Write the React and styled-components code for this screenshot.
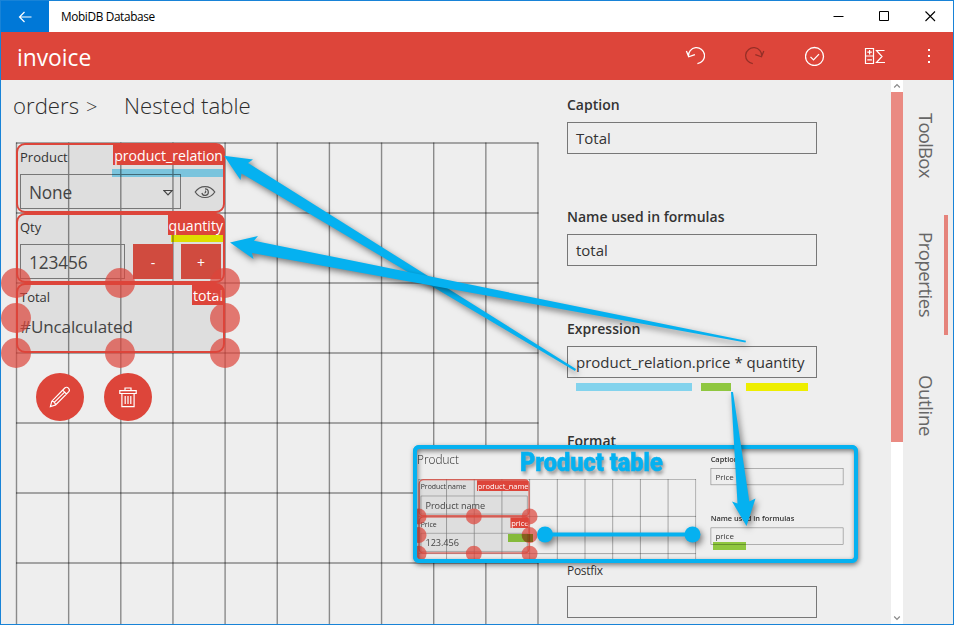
import React from 'react';
import styled, { createGlobalStyle, css } from 'styled-components';

const RED = '#dd453a';
const CYAN = '#05b1f0';
const SURFACE = '#eeeeee';

const GlobalStyle = createGlobalStyle`
  *, *::before, *::after { box-sizing: border-box; }
  body { margin: 0; overflow: hidden; }
  button { font: inherit; border: 0; padding: 0; margin: 0; }
`;

/* ---------- window chrome ---------- */

const Window = styled.div`
  position: relative;
  display: flex;
  flex-direction: column;
  width: 954px;
  height: 625px;
  overflow: hidden;
  border: 1px solid #1883d7;
  background: ${SURFACE};
  color: #333;
  font-family: 'Open Sans', 'Noto Sans', sans-serif;
`;

const TitleBar = styled.header`
  display: flex;
  flex: 0 0 31px;
  background: #fff;
`;

const BackButton = styled.button`
  display: grid;
  place-items: center;
  width: 48px;
  background: #0078d7;
  color: #fff;
`;

const WindowTitle = styled.div`
  flex: 1;
  padding-left: 12px;
  color: #000;
  font-size: 11.8px;
  line-height: 30px;
  letter-spacing: -0.35px;
`;

const CaptionButton = styled.button`
  display: grid;
  place-items: center;
  width: 46px;
  background: transparent;
  color: #000;
`;

const AppBar = styled.div`
  display: flex;
  flex: 0 0 48px;
  background: ${RED};
  color: #fff;
`;

const AppTitle = styled.h1`
  flex: 1;
  margin: 0;
  padding: 3px 0 0 16px;
  font-size: 22.8px;
  font-weight: 400;
  line-height: 45px;
`;

const BarButton = styled.button`
  display: grid;
  place-items: center;
  width: ${(p) => p.$width || 60}px;
  background: transparent;
  color: ${(p) => (p.$muted ? '#962f27' : '#fff')};
`;

const Body = styled.main`
  display: flex;
  flex: 1;
  min-height: 0;
`;

/* ---------- design surface ---------- */

const Designer = styled.section`
  flex: 0 0 ${(p) => p.$width}px;
  padding-left: ${(p) => p.$inset}px;
`;

const Crumbs = styled.nav`
  display: flex;
  align-items: flex-end;
  height: ${(p) => p.$height}px;
  padding-bottom: 21px;
  margin-left: -2px;
  font-size: 22.2px;
  font-weight: 300;
  line-height: 30px;
  color: #2c2c2c;
`;

const CrumbSeparator = styled.span`
  width: 38px;
  margin-left: 7px;
  font-size: 20px;
  transform: translateY(1px);
`;

const Canvas = styled.div`
  position: relative;
  width: 524px;
  height: 490px;
`;

const GridLines = styled.svg`
  display: block;
  stroke: #000;
  stroke-opacity: 0.42;
  stroke-width: 1.4;
`;

const Widget = styled.div`
  position: absolute;
  left: 1px;
  top: ${(p) => p.$row * 70 + 1}px;
  display: flex;
  flex-direction: column;
  width: 209px;
  height: 70px;
  padding: 2px;
  border: 2px solid ${RED};
  border-radius: 9px;
  background: rgba(0, 0, 0, 0.065);
`;

const WidgetHead = styled.div`
  display: flex;
  justify-content: space-between;
  height: 29px;
  margin: -2px -2px 0 0;
  font-size: 13px;
  line-height: 24px;
`;

const NameTag = styled.span`
  height: 20px;
  padding: 0 0 0 1px;
  border-top-right-radius: 5px;
  background: ${RED};
  color: #fff;
  font-size: 14.1px;
  line-height: 21px;
`;

const WidgetRow = styled.div`
  display: flex;
  gap: 8px;
  height: 35px;
`;

const ValueBox = styled.div`
  display: flex;
  align-items: center;
  justify-content: space-between;
  width: ${(p) => p.$width}px;
  padding: 2px 7px 0 8px;
  border: 1px solid #777;
  color: #444;
  font-size: 17.3px;
  letter-spacing: -0.15px;
`;

const PlainValue = styled.div`
  font-size: 17px;
  line-height: 25px;
  letter-spacing: -0.1px;
  color: #444;
`;

const StepButton = styled.button`
  width: 40px;
  background: #d04b3f;
  color: #fff;
  font-size: 14px;
  line-height: 38px;
`;

const EyeSlot = styled.div`
  display: grid;
  place-items: center;
  width: 32px;
  color: #555;
`;

const Handle = styled.i`
  position: absolute;
  left: ${(p) => p.$x - 15}px;
  top: ${(p) => p.$y - 14}px;
  width: 30px;
  height: 30px;
  border-radius: 50%;
  background: rgba(221, 69, 58, 0.7);
`;

const WidgetActions = styled.div`
  position: absolute;
  left: 21px;
  top: 231px;
  display: flex;
  gap: 20px;
`;

const RoundButton = styled.button`
  display: grid;
  place-items: center;
  width: 48px;
  height: 48px;
  border-radius: 50%;
  background: ${RED};
  color: #fff;
`;

/* ---------- properties ---------- */

const PropertyPane = styled.section`
  flex: 0 0 324px;
  padding-top: ${(p) => p.$top}px;
`;

const Field = styled.label`
  display: block;
  width: 250px;
  height: 112px;
`;

const FieldLabel = styled.span`
  display: block;
  height: 28px;
  font-size: 14px;
  font-weight: 600;
  line-height: 22px;
  ${(p) =>
    p.$plain &&
    css`
      height: 44px;
      padding-top: 20px;
      font-size: 12px;
      font-weight: 400;
      line-height: 17px;
      letter-spacing: -0.3px;
    `}
`;

const FieldBox = styled.span`
  display: block;
  height: 32px;
  padding-left: 8px;
  border: 1px solid #777;
  font-size: 15px;
  line-height: 31px;
`;

/* ---------- scrollbar and side tabs ---------- */

const ScrollBar = styled.div`
  display: flex;
  flex: 0 0 12px;
  flex-direction: column;
  margin-left: auto;
  background: #fff;
  color: #888;
`;

const ScrollArrow = styled.span`
  display: grid;
  place-items: center;
  height: 12px;
`;

const ScrollThumb = styled.span`
  height: 350px;
  margin-bottom: auto;
  background: #ea8a82;
`;

const Tabs = styled.aside`
  display: flex;
  flex: 0 0 50px;
  flex-direction: column;
  gap: 10px;
  padding: 5px 5px 0 0;
`;

const Tab = styled.div`
  display: flex;
  align-items: center;
  justify-content: center;
  height: 120px;
  padding-left: 4px;
  border-right: 4px solid ${(p) => (p.$active ? '#e5837b' : 'transparent')};
`;

const TabText = styled.span`
  color: #666;
  font-size: 18.6px;
  line-height: 26px;
  letter-spacing: ${(p) => p.$tracking}px;
  writing-mode: vertical-rl;
`;

/* ---------- annotations ---------- */

const Inset = styled.div`
  position: absolute;
  left: 412px;
  top: 444px;
  width: 445px;
  height: 118px;
  overflow: hidden;
  border: 4px solid ${CYAN};
  border-radius: 6px;
  background: ${SURFACE};
`;

const InsetFrame = styled.div`
  position: absolute;
  left: 412px;
  top: 444px;
  width: 445px;
  height: 118px;
  border: 4px solid ${CYAN};
  border-radius: 6px;
  box-shadow: 1px 2px 5px rgba(0, 0, 0, 0.5), inset 1px 2px 5px rgba(0, 0, 0, 0.5);
`;

const InsetStage = styled.div`
  display: flex;
  width: 830px;
  height: 210px;
  transform: scale(0.531);
  transform-origin: 0 0;
`;

const InsetTitle = styled.div`
  position: absolute;
  left: 519px;
  top: 446px;
  color: ${CYAN};
  font-family: Roboto, sans-serif;
  font-size: 26px;
  font-weight: 900;
  line-height: 30px;
  white-space: nowrap;
  -webkit-text-stroke: 0.5px ${CYAN};
  text-shadow: 2px 3px 4px rgba(0, 0, 0, 0.4);
  transform: scaleX(0.905);
  transform-origin: 0 0;
`;

const markerColors = { blue: '#8ce2fe', green: '#99d644', yellow: '#ffff00' };

const Marker = styled.i`
  position: absolute;
  left: ${(p) => p.$x - 1}px;
  top: ${(p) => p.$y - 1}px;
  width: ${(p) => p.$w}px;
  height: ${(p) => p.$h || 8}px;
  background: ${(p) => markerColors[p.$color]};
  mix-blend-mode: multiply;
`;

const Arrows = styled.svg`
  position: absolute;
  left: -1px;
  top: -1px;
  fill: ${CYAN};
  pointer-events: none;

  g { filter: drop-shadow(2px 3px 3px rgba(0, 0, 0, 0.5)); }
`;

/* ---------- icons ---------- */

const Icon = ({ w, h = w, stroke = 1.3, children }) => (
  <svg width={w} height={h} viewBox={`0 0 ${w} ${h}`} fill="none" stroke="currentColor" strokeWidth={stroke}>
    {children}
  </svg>
);

const BackIcon = () => (
  <Icon w={14} h={12} stroke={1.2}><path d="M13.5 6H1.5M6.5 1 1.5 6l5 5" /></Icon>
);
const UndoIcon = () => (
  <Icon w={20}><path d="M3.6 10.6A8 8 0 1 1 12.4 17.6M1.4 5l2.3 5.8 6.2-2.2" /></Icon>
);
const RedoIcon = () => (
  <Icon w={20}><path d="M16.6 10.6A8 8 0 1 0 7.8 17.6M18.8 5l-2.3 5.8-6.2-2.2" /></Icon>
);
const CheckIcon = () => (
  <Icon w={20}><circle cx="9.5" cy="10.5" r="9" /><path d="m5.5 10.9 3 3 5.500-5.800" /></Icon>
);
const FormulaIcon = () => (
  <Icon w={22} h={18} stroke={1.2}>
    <path d="M1.5 1.5h8v15h-8zM1.5 9h8M3.3 5.2h4.6M5.6 3v4.5M3.3 12.8h4.6M20.5 3.5h-8l5.500 6-5.500 6h8.500" />
  </Icon>
);
const MoreIcon = () => (
  <Icon w={4} h={16} stroke={0}>
    <path fill="currentColor" d="M1 1h2v2H1zM1 7h2v2H1zM1 13h2v2H1z" />
  </Icon>
);
const EyeIcon = () => (
  <Icon w={22} h={14} stroke={1.2}>
    <path d="M1.2 7C6-.3 16-.3 20.8 7 16 14.3 6 14.3 1.2 7z" />
    <path d="M11 3.8A3.3 3.3 0 1 1 7.9 8M11 5.9c1.2.3 1 2-.5 1.9" />
  </Icon>
);
const DropIcon = () => (
  <Icon w={10} h={8} stroke={1.1}><path d="M.8 1.5h8.400L5 6z" /></Icon>
);
const PencilIcon = () => (
  <Icon w={22} stroke={1.2}>
    <path d="m1.4 20.6 1.4-5.4L15.8 2c1.3-1.3 2.7-.7 3.6.2s1.5 2.3.2 3.6L6.6 19zM2.8 15.2c1.8.2 3.4 1.8 3.8 3.8M13.7 4.2l3.8 3.8M15.6 6.1 5 16.7" />
  </Icon>
);
const TrashIcon = () => (
  <Icon w={18} h={22} stroke={1.2}>
    <path d="M.8 4.6h16.4v2.9H.8zM6 4.5V2h6v2.5M2.9 7.6v13h12.2v-13M6.2 10v8M9 10v8M11.8 10v8" />
  </Icon>
);

/* ---------- parts ---------- */

const DesignGrid = () => (
  <GridLines width="524" height="490" viewBox="0 0 524 490">
    {Array.from({ length: 11 }, (_, i) => (
      <line key={`v${i}`} x1={1.5 + i * 52.15} x2={1.5 + i * 52.15} y1="0.5" y2="490" />
    ))}
    {Array.from({ length: 7 }, (_, i) => (
      <line key={`h${i}`} x1="1" x2="523.5" y1={1 + i * 70} y2={1 + i * 70} />
    ))}
  </GridLines>
);

const HANDLES = [[1, 0], [105, 0], [210, 0], [1, 35], [210, 35], [1, 70], [105, 70], [210, 70]];

const SelectionHandles = ({ row }) =>
  HANDLES.map(([x, y]) => <Handle key={`${x}-${y}`} $x={x} $y={row * 70 + y} />);

const DesignWidget = ({ row, caption, name, children }) => (
  <Widget $row={row}>
    <WidgetHead>
      {caption}
      <NameTag>{name}</NameTag>
    </WidgetHead>
    {children}
  </Widget>
);

const Property = ({ label, value, plain }) => (
  <Field>
    <FieldLabel $plain={plain}>{label}</FieldLabel>
    <FieldBox>{value}</FieldBox>
  </Field>
);

const ProductTableInset = () => (
  <Inset>
    <InsetStage>
      <Designer $width={553} $inset={2}>
        <Crumbs $height={56}>Product</Crumbs>
        <Canvas>
          <DesignGrid />
          <DesignWidget row={0} caption="Product name" name="product_name">
            <WidgetRow><ValueBox $width={201}>Product name</ValueBox></WidgetRow>
          </DesignWidget>
          <DesignWidget row={1} caption="Price" name="price">
            <WidgetRow><ValueBox $width={201}>123.456</ValueBox></WidgetRow>
          </DesignWidget>
          <SelectionHandles row={1} />
        </Canvas>
      </Designer>
      <PropertyPane $top={8}>
        <Property label="Caption" value="Price" />
        <Property label="Name used in formulas" value="price" />
      </PropertyPane>
    </InsetStage>
  </Inset>
);

export default function App() {
  return (
    <Window>
      <GlobalStyle />
      <TitleBar>
        <BackButton><BackIcon /></BackButton>
        <WindowTitle>MobiDB Database</WindowTitle>
        <CaptionButton><Icon w={11} stroke={1}><path d="M.5 5.5h10" /></Icon></CaptionButton>
        <CaptionButton><Icon w={11} stroke={1}><path d="M.5.5h9v9h-9z" /></Icon></CaptionButton>
        <CaptionButton><Icon w={11} stroke={1.1}><path d="m.5.5 9.5 9.5M10 .5.5 10" /></Icon></CaptionButton>
      </TitleBar>

      <AppBar>
        <AppTitle>invoice</AppTitle>
        <BarButton><UndoIcon /></BarButton>
        <BarButton $muted><RedoIcon /></BarButton>
        <BarButton><CheckIcon /></BarButton>
        <BarButton><FormulaIcon /></BarButton>
        <BarButton $width={48}><MoreIcon /></BarButton>
      </AppBar>

      <Body>
        <Designer $width={566} $inset={14}>
          <Crumbs $height={62}>
            orders<CrumbSeparator>&gt;</CrumbSeparator>Nested table
          </Crumbs>
          <Canvas>
            <DesignGrid />
            <DesignWidget row={0} caption="Product" name="product_relation">
              <WidgetRow>
                <ValueBox $width={161}>None<DropIcon /></ValueBox>
                <EyeSlot><EyeIcon /></EyeSlot>
              </WidgetRow>
            </DesignWidget>
            <DesignWidget row={1} caption="Qty" name="quantity">
              <WidgetRow>
                <ValueBox $width={105}>123456</ValueBox>
                <StepButton>-</StepButton>
                <StepButton>+</StepButton>
              </WidgetRow>
            </DesignWidget>
            <DesignWidget row={2} caption="Total" name="total">
              <PlainValue>#Uncalculated</PlainValue>
            </DesignWidget>
            <SelectionHandles row={2} />
            <WidgetActions>
              <RoundButton><PencilIcon /></RoundButton>
              <RoundButton><TrashIcon /></RoundButton>
            </WidgetActions>
          </Canvas>
        </Designer>

        <PropertyPane $top={14}>
          <Property label="Caption" value="Total" />
          <Property label="Name used in formulas" value="total" />
          <Property label="Expression" value="product_relation.price * quantity" />
          <Property label="Format" />
          <Property label="Postfix" plain />
        </PropertyPane>

        <ScrollBar>
          <ScrollArrow><Icon w={8} h={6} stroke={1.2}><path d="M1.2 4.5 4 1.7l2.8 2.8" /></Icon></ScrollArrow>
          <ScrollThumb />
          <ScrollArrow><Icon w={8} h={6} stroke={1.2}><path d="M1.2 1.5 4 4.3l2.8-2.8" /></Icon></ScrollArrow>
        </ScrollBar>

        <Tabs>
          <Tab><TabText $tracking={-0.8}>ToolBox</TabText></Tab>
          <Tab $active><TabText $tracking={-0.5}>Properties</TabText></Tab>
          <Tab><TabText $tracking={-0.4}>Outline</TabText></Tab>
        </Tabs>
      </Body>

      <ProductTableInset />
      <InsetFrame />
      <InsetTitle>Product table</InsetTitle>

      <Marker $color="blue" $x={112} $y={169} $w={111} />
      <Marker $color="yellow" $x={171} $y={235} $w={52} $h={7} />
      <Marker $color="blue" $x={576} $y={383} $w={116} />
      <Marker $color="green" $x={701} $y={383} $w={30} />
      <Marker $color="yellow" $x={746} $y={383} $w={62} />
      <Marker $color="green" $x={508} $y={534} $w={25} />
      <Marker $color="green" $x={713} $y={542} $w={33} />

      <Arrows width="954" height="625" viewBox="0 0 954 625">
        <g><path d="M224 155.7 253 159.5 248 163 576 369 575 371 241.5 173.5 240.5 180z" /></g>
        <g><path d="M230 242.5 258 236 254 240.7 746 340.7 745.5 342.5 252 253 253.5 259z" /></g>
        <g><path d="M731 392h2L749.3 501.5 755.5 498.5 746.5 526 732 501.5 737.5 503.5z" /></g>
        <g>
          <rect x="545" y="532.5" width="148" height="4" />
          <circle cx="545" cy="534.5" r="8" />
          <circle cx="692.5" cy="534.5" r="8" />
        </g>
      </Arrows>
    </Window>
  );
}
